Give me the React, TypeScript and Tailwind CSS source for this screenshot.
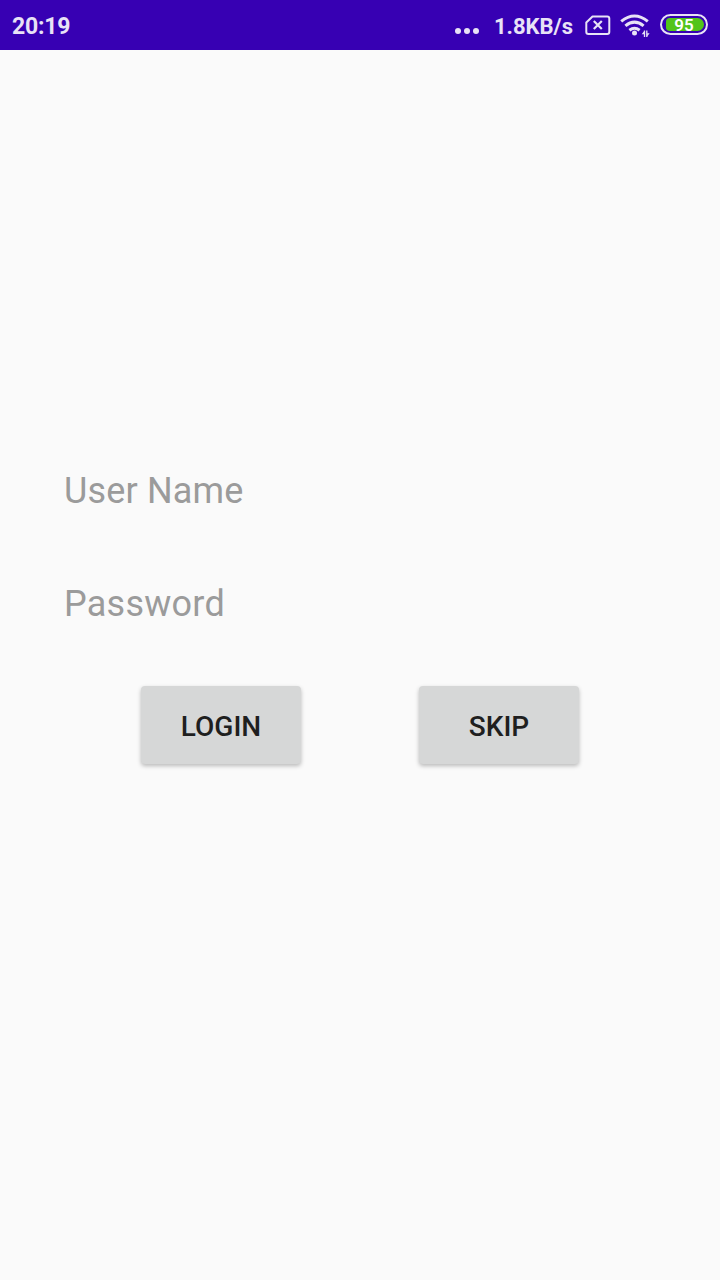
import React from "react";

function NoSimIcon() {
  return (
    <svg className="ml-[11px] mt-[15px] h-5 w-[27px] shrink-0" viewBox="0 0 27 20" fill="none" stroke="#e8e2f6" strokeWidth="2">
      <path d="M8.500 1.500H23.200Q25.300 1.500 25.300 3.500V17Q25.300 19 23.200 19H4.400Q2.300 19 2.300 17V7.500Z" strokeLinejoin="round" />
      <path d="M9.800 6l8 8M17.800 6l-8 8" strokeWidth="2.200" />
    </svg>
  );
}

function WifiIcon() {
  return (
    <svg className="ml-[8px] mt-[13px] h-[25px] w-[31px] shrink-0" viewBox="0 0 31 25" fill="none" stroke="#e8e2f6" strokeWidth="3">
      <path d="M2.200 8.400Q15.500 -2.400 28.800 8.400M6.400 12.900Q15.500 5.300 24.600 12.900M10.400 17.200Q15.500 13.200 20.600 17.200" />
      <circle cx="15.500" cy="20" r="2.500" fill="#e8e2f6" stroke="none" />
      <path d="M25.500 24v-6.500M27.800 17.500v6.500" strokeWidth="1.300" />
      <path d="M25.200 18l-2.500 3.300h2.500ZM28.100 23.500l2.500-3.300h-2.500Z" fill="#e8e2f6" stroke="none" />
    </svg>
  );
}

function Battery() {
  return (
    <div className="ml-[10px] mt-[14px] h-[21px] w-[48px] shrink-0 rounded-full border-2 border-[#e8e2f6] py-[2px] pl-[4px] pr-[2px]">
      <div className="flex h-full items-center justify-center rounded-l-[4px] rounded-r-[7px] bg-[#52c41a] pr-[2px] pt-[2px] text-[17px] font-semibold leading-none text-white">
        95
      </div>
    </div>
  );
}

function StatusBar() {
  return (
    <header className="flex h-[50px] bg-[#3700b3] pl-3 text-[#e8e2f6]">
      <span className="mt-[13px] text-[23px] font-bold leading-[28px] tracking-[-0.2px]">20:19</span>
      <div className="ml-auto flex pr-3">
        <div className="mr-[15px] mt-[28px] flex gap-[3px]">
          <i className="size-[6px] rounded-full bg-[#e8e2f6]" />
          <i className="size-[6px] rounded-full bg-[#e8e2f6]" />
          <i className="size-[6px] rounded-full bg-[#e8e2f6]" />
        </div>
        <span className="mt-[13px] text-[22px] font-bold leading-[28px]">1.8KB/s</span>
        <NoSimIcon />
        <WifiIcon />
        <Battery />
      </div>
    </header>
  );
}

function ActionButton({ children }: { children: React.ReactNode }) {
  return (
    <button className="flex h-[78px] w-[160px] items-center justify-center rounded-[4px] bg-[#d6d7d7] pt-[3px] text-[28px] font-medium text-[#1f1f1f] shadow-[0_2px_4px_rgba(0,0,0,0.26)]">
      {children}
    </button>
  );
}

export default function App() {
  return (
    <div className="h-[1280px] w-[720px] overflow-hidden bg-[#fafafa] font-[Roboto,sans-serif]">
      <StatusBar />
      <main className="pt-[419px]">
        <div className="flex flex-col gap-[69px] px-16">
          <input aria-label="User Name" placeholder="User Name" className="h-11 w-full bg-transparent text-[36px] tracking-[0.15px] outline-none placeholder:text-[#9b9b9b]" />
          <input aria-label="Password" type="password" placeholder="Password" className="h-11 w-full bg-transparent text-[36px] tracking-[0.25px] outline-none placeholder:text-[#9b9b9b]" />
        </div>
        <div className="ml-[141px] mt-[60px] flex gap-[118px]">
          <ActionButton>LOGIN</ActionButton>
          <ActionButton>SKIP</ActionButton>
        </div>
      </main>
    </div>
  );
}
